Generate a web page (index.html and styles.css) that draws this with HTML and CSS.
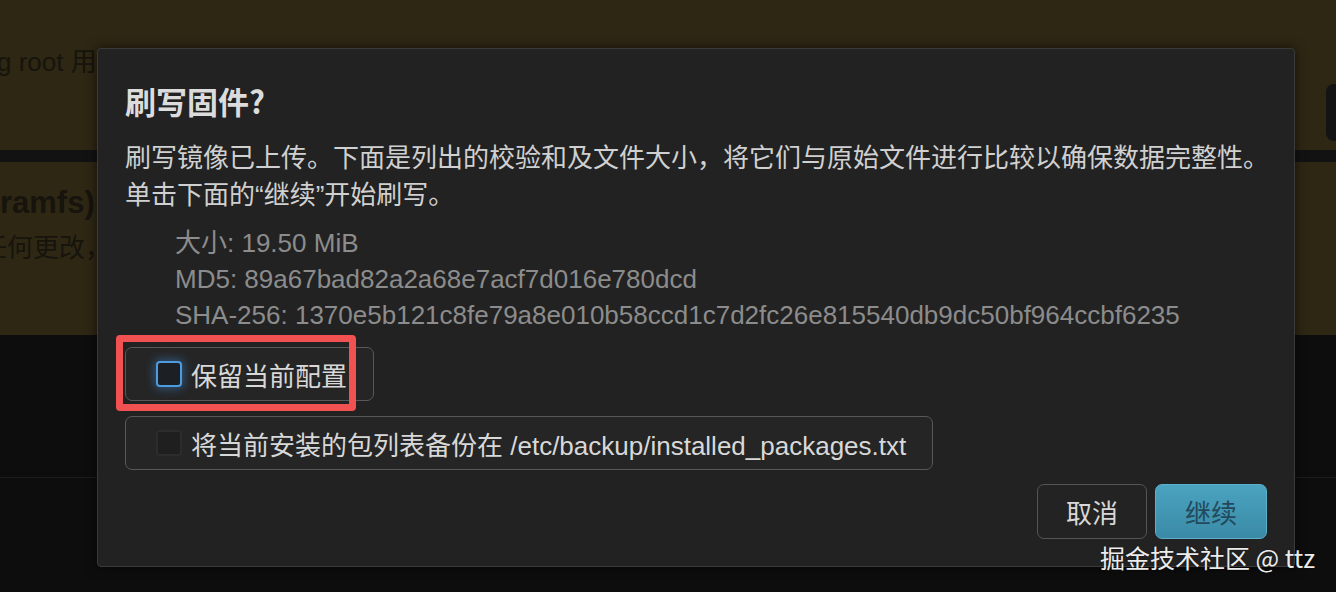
FILE: index.html
```html
<!DOCTYPE html>
<html lang="zh-CN">
<head>
    <meta charset="UTF-8">
    <meta name="viewport" content="width=device-width, initial-scale=1.0">
    <title>刷写固件</title>
    <link rel="stylesheet" href="styles.css">
</head>
<body>
    <div class="page">
        <div class="alert top">
            <p class="alert-text root-text">g root 用户</p>
            <button class="peek" type="button">&nbsp;</button>
        </div>
        <div class="divider"></div>
        <div class="alert mid">
            <h3 class="alert-title">ramfs)</h3>
            <p class="alert-text change-text">任何更改，</p>
        </div>
        <div class="lower"></div>
    </div>

    <div class="modal">
        <h2 class="modal-title">刷写固件?</h2>
        <p class="modal-text">刷写镜像已上传。下面是列出的校验和及文件大小，将它们与原始文件进行比较以确保数据完整性。<br>单击下面的“继续”开始刷写。</p>
        <ul class="sums">
            <li>大小: 19.50 MiB</li>
            <li>MD5: 89a67bad82a2a68e7acf7d016e780dcd</li>
            <li>SHA-256: 1370e5b121c8fe79a8e010b58ccd1c7d2fc26e815540db9dc50bf964ccbf6235</li>
        </ul>
        <label class="option keep">
            <input type="checkbox" class="check focused">
            <span>保留当前配置</span>
            <span class="mark"></span>
        </label>
        <label class="option">
            <input type="checkbox" class="check">
            <span>将当前安装的包列表备份在 /etc/backup/installed_packages.txt</span>
        </label>
        <div class="actions">
            <button type="button" class="btn">取消</button>
            <button type="button" class="btn primary">继续</button>
        </div>
    </div>

    <div class="watermark">掘金技术社区 @ ttz</div>
</body>
</html>
```

FILE: styles.css
```css
html, body {
    margin: 0;
    height: 592px;
    overflow: hidden;
}
body {
    position: relative;
    background-color: #0d0d0d;
    font-family: "Liberation Sans", "Noto Sans CJK SC", sans-serif;
}
.page {
    width: 1336px;
    overflow: hidden;
}
.alert {
    background-color: #2e2714;
    color: #16140c;
    font-size: 26px;
}
.alert.top {
    height: 150px;
    display: flex;
    justify-content: space-between;
    align-items: flex-start;
}
.root-text {
    margin: 41px 0 0 -3px;
}
.peek {
    margin: 84px -90px 0 0;
    width: 100px;
    height: 57px;
    border: none;
    border-radius: 8px;
    background-color: #141414;
}
.divider {
    height: 12px;
    background-color: #121212;
}
.alert.mid {
    height: 173px;
    padding-top: 1px;
    box-sizing: border-box;
}
.alert-title {
    margin: 22px 0 0 0;
    font-size: 31px;
    line-height: 36px;
}
.change-text {
    margin: 6px 0 0 -19px;
    font-family: "Noto Sans CJK SC", sans-serif;
}
.lower {
    height: 142px;
    border-bottom: 1px solid #1d1d1d;
}

.modal {
    position: absolute;
    left: 97px;
    top: 48px;
    width: 1198px;
    height: 519px;
    box-sizing: border-box;
    padding: 30px 27px 27px;
    background-color: #222222;
    border: 1px solid #3a3a3a;
    border-radius: 4px;
    box-shadow: 0 0 12px rgba(0, 0, 0, 0.6);
    color: #d6d6d6;
    display: flex;
    flex-direction: column;
    align-items: flex-start;
}
.modal-title {
    margin: 0;
    font-family: "Noto Sans CJK SC", sans-serif;
    font-size: 31px;
    line-height: 44px;
    color: #dcdcdc;
}
.modal-text {
    margin: 17px 0 0;
    font-size: 26px;
    line-height: 37px;
    color: #d0d0d0;
    white-space: nowrap;
}
.sums {
    list-style: none;
    margin: 11px 0 0;
    padding: 0 0 0 50px;
    font-size: 26px;
    line-height: 36px;
    color: #8c8c8c;
}
.option {
    position: relative;
    display: flex;
    align-items: center;
    gap: 9px;
    height: 54px;
    box-sizing: border-box;
    padding: 0 26px 0 30px;
    border: 1.5px solid #585858;
    border-radius: 7px;
    background-color: #252525;
    font-size: 26px;
    color: #d8d8d8;
}
.keep {
    margin-top: 14px;
}
.option + .option {
    margin-top: 15px;
}
.check {
    appearance: none;
    margin: 0;
    width: 26px;
    height: 26px;
    border: 2px solid #2c2c2c;
    border-radius: 4px;
    background-color: #1f1f1f;
}
.check.focused {
    border-color: #4d9be0;
    background-color: #1c1f24;
    box-shadow: 0 0 10px 2px rgba(60, 140, 220, 0.45);
}
.mark {
    position: absolute;
    left: -10px;
    top: -13px;
    width: 240px;
    height: 76px;
    box-sizing: border-box;
    border: 7px solid #f25151;
    border-radius: 4px;
}
.actions {
    margin-top: auto;
    align-self: flex-end;
    display: flex;
    gap: 8px;
}
.btn {
    height: 55px;
    width: 110px;
    border: 1.5px solid #555555;
    border-radius: 7px;
    background-color: #232323;
    color: #d8d8d8;
    font-family: "Noto Sans CJK SC", sans-serif;
    font-size: 26px;
}
.btn.primary {
    width: 112px;
    border-color: #5db0ca;
    background: linear-gradient(#4aa3c0, #3a8aa6);
    color: #224a5c;
}
.watermark {
    position: absolute;
    left: 1100px;
    top: 539px;
    font-family: "Noto Sans CJK SC", sans-serif;
    font-size: 25px;
    line-height: 36px;
    color: #ececec;
    text-shadow: 0 0 2px rgba(0, 0, 0, 0.5);
}
```
